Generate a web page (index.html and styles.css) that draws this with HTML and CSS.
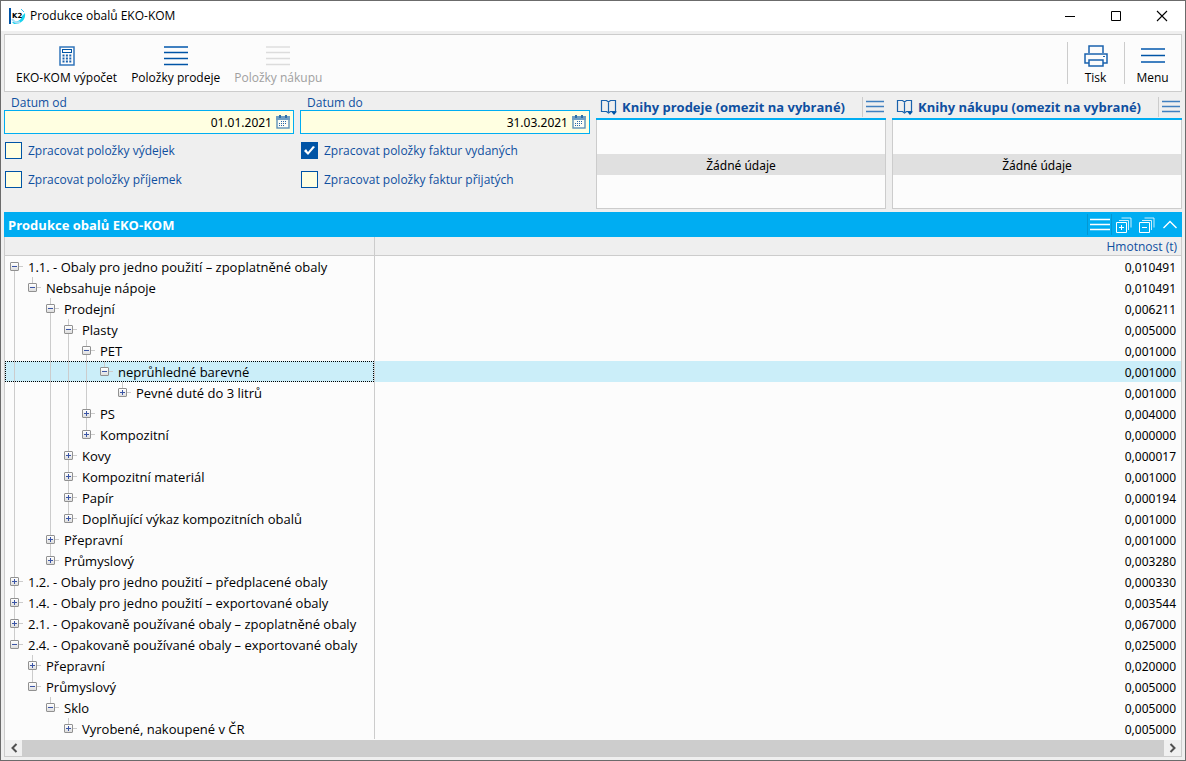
FILE: index.html
```html
<!DOCTYPE html>
<html lang="cs">
<head>
<meta charset="utf-8">
<title>Produkce obalů EKO-KOM</title>
<link rel="stylesheet" href="styles.css">
</head>
<body>
<svg class="defs" aria-hidden="true">
  <symbol id="calendar" viewBox="0 0 14 14"><rect x="1" y="2" width="12" height="11" fill="#fdfdf5" stroke="#5f92b8" stroke-width="1.4"/><path d="M0 1h14v4H0z" fill="#6f9fc4"/><path d="M3 0h2v3H3zM9 0h2v3H9z" fill="#2c6fa8"/><path d="M5 6.500h6M3 8.500h8M3 10.500h6" stroke="#2a67a8" stroke-dasharray="1 1"/></symbol>
  <symbol id="book" viewBox="0 0 17 16"><path d="M1.500 12.500V1.500H6.500L8.500 3L10.500 1.500H15.500V12.500H10.500L8.500 14L6.500 12.500zM8.500 3V13" fill="none" stroke="#1a62ad" stroke-width="1.200"/><path d="M11 12.500h6L14 16z" fill="#0054a6"/></symbol>
  <symbol id="lines" viewBox="0 0 20 14"><path d="M0 1.500h20M0 6.500h20M0 11.500h20" fill="none" stroke="currentColor" stroke-width="1.500"/></symbol>
</svg>
<div class="window">
  <header class="titlebar">
    <svg class="logo" width="17" height="17" viewBox="0 0 17 17" aria-hidden="true"><path d="M16 5c1 6-3 11-11 11l-2-2c6 0 9-2 10-6z" fill="#19d3ee"/><path d="M3 11c2 3 5 4 8 3" fill="none" stroke="#a8def5" stroke-width="2"/><path d="M12 1l3 3" stroke="#35bff0"/><path d="M0 0h2v16H0z" fill="#0054a6"/><text x="3" y="10" class="logo-text">K2</text></svg>
    <h1>Produkce obalů EKO-KOM</h1>
    <div class="window-buttons">
      <button aria-label="Minimalizovat"><svg width="12" height="12"><path d="M1 6.500h10" stroke="#000"/></svg></button>
      <button aria-label="Maximalizovat"><svg width="12" height="12"><path d="M1.500 1.500h9v9h-9z" fill="none" stroke="#000"/></svg></button>
      <button aria-label="Zavřít"><svg width="12" height="12"><path d="M1 1l10 10M11 1L1 11" stroke="#000" stroke-width="1.100"/></svg></button>
    </div>
  </header>

  <main class="content">
    <nav class="toolbar">
      <button class="tool"><svg width="24" height="24" viewBox="0 0 24 24"><rect x="5" y="3" width="14" height="18" fill="#fcfcfc" stroke="#3275bb" stroke-width="1.500"/><rect x="7.500" y="5.500" width="9" height="3" fill="none" stroke="#0054a6"/><path d="M7.500 11.500h9M7.500 14.500h9M7.500 17.500h9" stroke="#1a62ad" stroke-width="2" stroke-dasharray="2 1.400"/></svg>EKO-KOM výpočet</button>
      <button class="tool"><svg width="24" height="24" viewBox="0 0 24 24"><path d="M0 3h24" stroke="#4080c0" stroke-width="2"/><path d="M0 8.500h24M0 14.500h24M0 20.500h24" stroke="#0054a6" stroke-width="1.400"/></svg>Položky prodeje</button>
      <button class="tool" disabled><svg width="24" height="24" viewBox="0 0 24 24"><path d="M0 3h24" stroke="#e6e6e6" stroke-width="2"/><path d="M0 8.500h24M0 14.500h24M0 20.500h24" stroke="#dcdcdc" stroke-width="1.400"/></svg>Položky nákupu</button>
      <div class="tools-right">
        <button class="tool"><svg width="24" height="24" viewBox="0 0 24 24" fill="#fcfcfc" stroke="#1a62ad" stroke-width="1.500"><path d="M5 9V2h14v7M5 19H1V10h22v9h-4"/><path d="M5 16h14v6H5z"/><path d="M19 12.500h2" stroke-width="1"/></svg>Tisk</button>
        <button class="tool"><svg width="24" height="24" viewBox="0 0 24 24"><path d="M0 5h24M0 18h24" stroke="#4080c0" stroke-width="2"/><path d="M0 11.500h24" stroke="#0054a6" stroke-width="1.500"/></svg>Menu</button>
      </div>
    </nav>

    <section class="filters">
      <div class="filter">
        <label class="date-label" for="from">Datum od</label>
        <div class="date"><input id="from" value="01.01.2021"><button aria-label="Vybrat datum od"><svg width="14" height="14"><use href="#calendar"/></svg></button></div>
        <label class="check"><input type="checkbox">Zpracovat položky výdejek</label>
        <label class="check"><input type="checkbox">Zpracovat položky příjemek</label>
      </div>
      <div class="filter">
        <label class="date-label" for="to">Datum do</label>
        <div class="date"><input id="to" value="31.03.2021"><button aria-label="Vybrat datum do"><svg width="14" height="14"><use href="#calendar"/></svg></button></div>
        <label class="check"><input type="checkbox" checked>Zpracovat položky faktur vydaných</label>
        <label class="check"><input type="checkbox">Zpracovat položky faktur přijatých</label>
      </div>
      <section class="books">
        <header><svg width="17" height="16"><use href="#book"/></svg><h2>Knihy prodeje (omezit na vybrané)</h2><button aria-label="Nabídka knih prodeje"><svg width="18" height="14" viewBox="0 0 20 14" preserveAspectRatio="none"><use href="#lines"/></svg></button></header>
        <div class="books-body"><p>Žádné údaje</p></div>
      </section>
      <section class="books">
        <header><svg width="17" height="16"><use href="#book"/></svg><h2>Knihy nákupu (omezit na vybrané)</h2><button aria-label="Nabídka knih nákupu"><svg width="18" height="14" viewBox="0 0 20 14" preserveAspectRatio="none"><use href="#lines"/></svg></button></header>
        <div class="books-body"><p>Žádné údaje</p></div>
      </section>
    </section>

    <section class="report">
      <header class="report-head">
        <h2>Produkce obalů EKO-KOM</h2>
        <button class="lined" aria-label="Nabídka"><svg width="20" height="14"><use href="#lines"/></svg></button>
        <button aria-label="Rozbalit vše"><svg width="16" height="16" fill="none" stroke="#fff"><path d="M.5 5.500h10v10h-10zM3 10.500h5M5.500 8v5"/><path d="M3 3.500h9.500V13M5.500 1h9.500v9.500" opacity=".8"/></svg></button>
        <button aria-label="Sbalit vše"><svg width="16" height="16" fill="none" stroke="#fff"><path d="M.5 5.500h10v10h-10zM3 10.500h5"/><path d="M3 3.500h9.500V13M5.500 1h9.500v9.500" opacity=".8"/></svg></button>
        <button aria-label="Skrýt"><svg width="14" height="14" fill="none" stroke="#fff" stroke-width="1.400"><path d="M.5 10L7 3.500l6.500 6.500"/></svg></button>
      </header>
      <div class="grid">
        <table>
          <thead><tr><th class="name"></th><th>Hmotnost (t)</th></tr></thead>
          <tbody>
            <tr><td><div class="node"><button class="minus first" aria-label="Sbalit"></button>1.1. - Obaly pro jedno použití – zpoplatněné obaly</div></td><td>0,010491</td></tr>
            <tr><td><div class="node"><i class="bar"></i><button class="minus" aria-label="Sbalit"></button>Nebsahuje nápoje</div></td><td>0,010491</td></tr>
            <tr><td><div class="node"><i class="bar"></i><i></i><button class="minus mid" aria-label="Sbalit"></button>Prodejní</div></td><td>0,006211</td></tr>
            <tr><td><div class="node"><i class="bar"></i><i></i><i class="bar"></i><button class="minus mid" aria-label="Sbalit"></button>Plasty</div></td><td>0,005000</td></tr>
            <tr><td><div class="node"><i class="bar"></i><i></i><i class="bar"></i><i class="bar"></i><button class="minus mid" aria-label="Sbalit"></button>PET</div></td><td>0,001000</td></tr>
            <tr class="selected"><td><div class="node"><i class="bar"></i><i></i><i class="bar"></i><i class="bar"></i><i class="bar"></i><button class="minus" aria-label="Sbalit"></button>neprůhledné barevné</div></td><td>0,001000</td></tr>
            <tr><td><div class="node"><i class="bar"></i><i></i><i class="bar"></i><i class="bar"></i><i class="bar"></i><i></i><button class="plus" aria-label="Rozbalit"></button>Pevné duté do 3 litrů</div></td><td>0,001000</td></tr>
            <tr><td><div class="node"><i class="bar"></i><i></i><i class="bar"></i><i class="bar"></i><button class="plus mid" aria-label="Rozbalit"></button>PS</div></td><td>0,004000</td></tr>
            <tr><td><div class="node"><i class="bar"></i><i></i><i class="bar"></i><i class="bar"></i><button class="plus" aria-label="Rozbalit"></button>Kompozitní</div></td><td>0,000000</td></tr>
            <tr><td><div class="node"><i class="bar"></i><i></i><i class="bar"></i><button class="plus mid" aria-label="Rozbalit"></button>Kovy</div></td><td>0,000017</td></tr>
            <tr><td><div class="node"><i class="bar"></i><i></i><i class="bar"></i><button class="plus mid" aria-label="Rozbalit"></button>Kompozitní materiál</div></td><td>0,001000</td></tr>
            <tr><td><div class="node"><i class="bar"></i><i></i><i class="bar"></i><button class="plus mid" aria-label="Rozbalit"></button>Papír</div></td><td>0,000194</td></tr>
            <tr><td><div class="node"><i class="bar"></i><i></i><i class="bar"></i><button class="plus" aria-label="Rozbalit"></button>Doplňující výkaz kompozitních obalů</div></td><td>0,001000</td></tr>
            <tr><td><div class="node"><i class="bar"></i><i></i><button class="plus mid" aria-label="Rozbalit"></button>Přepravní</div></td><td>0,001000</td></tr>
            <tr><td><div class="node"><i class="bar"></i><i></i><button class="plus" aria-label="Rozbalit"></button>Průmyslový</div></td><td>0,003280</td></tr>
            <tr><td><div class="node"><button class="plus mid" aria-label="Rozbalit"></button>1.2. - Obaly pro jedno použití – předplacené obaly</div></td><td>0,000330</td></tr>
            <tr><td><div class="node"><button class="plus mid" aria-label="Rozbalit"></button>1.4. - Obaly pro jedno použití – exportované obaly</div></td><td>0,003544</td></tr>
            <tr><td><div class="node"><button class="plus mid" aria-label="Rozbalit"></button>2.1. - Opakovaně používané obaly – zpoplatněné obaly</div></td><td>0,067000</td></tr>
            <tr><td><div class="node"><button class="minus" aria-label="Sbalit"></button>2.4. - Opakovaně používané obaly – exportované obaly</div></td><td>0,025000</td></tr>
            <tr><td><div class="node"><i></i><button class="plus mid" aria-label="Rozbalit"></button>Přepravní</div></td><td>0,020000</td></tr>
            <tr><td><div class="node"><i></i><button class="minus" aria-label="Sbalit"></button>Průmyslový</div></td><td>0,005000</td></tr>
            <tr><td><div class="node"><i></i><i></i><button class="minus" aria-label="Sbalit"></button>Sklo</div></td><td>0,005000</td></tr>
            <tr><td><div class="node"><i></i><i></i><i></i><button class="plus" aria-label="Rozbalit"></button>Vyrobené, nakoupené v ČR</div></td><td>0,005000</td></tr>
          </tbody>
        </table>
        <div class="scrollbar">
          <button aria-label="Posunout vlevo"><svg width="8" height="10"><path d="M6.500 1L2.500 5l4 4" fill="none" stroke="#505050" stroke-width="2"/></svg></button>
          <div class="thumb"></div>
          <button aria-label="Posunout vpravo"><svg width="8" height="10"><path d="M1.500 1l4 4-4 4" fill="none" stroke="#505050" stroke-width="2"/></svg></button>
        </div>
      </div>
    </section>
  </main>
</div>
</body>
</html>
```
FILE: styles.css
```css
*, *::before { box-sizing: border-box; }
body {
  margin: 0;
  font: 12px/16px "Open Sans", "Noto Sans", sans-serif;
  color: #000;
}
h1, h2, p { margin: 0; font-size: 12px; }
h2 { font-size: 13px; }
button {
  display: flex;
  align-items: center;
  justify-content: center;
  padding: 0;
  border: 0;
  background: none;
  font: inherit;
  color: inherit;
}
svg { display: block; flex: none; }
.defs { position: absolute; width: 0; height: 0; }

.window {
  display: flex;
  flex-direction: column;
  min-height: 100vh;
  border: 1px solid #6b6b6b;
  background: #efefef;
}
.titlebar {
  display: flex;
  align-items: center;
  height: 30px;
  padding-left: 8px;
  background: #fff;
}
.titlebar h1 {
  flex: 1;
  padding-left: 4px;
  font-weight: 400;
}
.logo-text { font: bold 7px "DejaVu Sans", sans-serif; }
.window-buttons { display: flex; }
.window-buttons button { width: 46px; height: 30px; }

.content {
  flex: 1;
  display: flex;
  flex-direction: column;
  padding: 3px;
}
.toolbar {
  display: flex;
  height: 58px;
  padding-left: 4px;
  border: 1px solid #ccc;
  background: #fcfcfc;
}
.tool {
  flex-direction: column;
  gap: 2px;
  padding: 6px 7px 2px;
}
.tool:disabled { color: #a0a0a0; }
.tools-right { display: flex; margin-left: auto; }
.tools-right .tool {
  min-width: 57px;
  position: relative;
}
.tools-right .tool::before {
  content: "";
  position: absolute;
  left: 0;
  top: 7px;
  bottom: 7px;
  border-left: 1px solid #ccc;
}

.filters {
  display: grid;
  grid-template-columns: repeat(4, 1fr);
  gap: 6px;
  padding: 3px 0;
}
.filter { color: #0f4fa0; }
.date-label { display: block; padding-left: 7px; line-height: 15px; }
.date {
  display: flex;
  align-items: center;
  height: 24px;
  padding-right: 3px;
  border: 1px solid #00adf2;
  background: #ffffe1;
}
.date input {
  flex: 1;
  min-width: 0;
  padding: 2px 4px 0 0;
  border: 0;
  background: none;
  font: 12px/16px "Noto Sans", sans-serif;
  text-align: right;
  outline: 0;
}
.check {
  display: flex;
  align-items: center;
  gap: 6px;
  height: 17px;
  margin: 8px 0 12px 1px;
}
.check + .check { margin: 0 0 0 1px; }
.check input {
  appearance: none;
  width: 17px;
  height: 17px;
  margin: 0;
  border: 1px solid #0054a6;
  background: #ffffe1;
}
.check input:checked { background: #0054a6; }
.check input:checked::before {
  content: "";
  display: block;
  width: 11px;
  height: 9px;
  margin: 3px 2px;
  background: #fff;
  clip-path: polygon(0 5px, 2px 3px, 4px 6px, 9px 0, 11px 1px, 4px 9px);
}

.books { display: flex; flex-direction: column; }
.books header {
  display: flex;
  align-items: center;
  height: 25px;
  padding-left: 4px;
  border-bottom: 2px solid #00adf2;
  color: #0f4fa0;
}
.books h2 { flex: 1; padding-left: 5px; }
.books header button {
  width: 24px;
  height: 20px;
  border-left: 1px solid #ccc;
  color: #4080c0;
}
.books-body {
  display: flex;
  align-items: center;
  height: 89px;
  border: 1px solid #ccc;
  border-top: 0;
  background: #fcfcfc;
}
.books p {
  flex: 1;
  padding-top: 2px;
  background: #e0e0e0;
  font-family: "Noto Sans", sans-serif;
  line-height: 19px;
  text-align: center;
}

.report { flex: 1; display: flex; flex-direction: column; }
.report-head {
  display: flex;
  align-items: center;
  height: 25px;
  padding: 0 1px 0 4px;
  background: #00adf2;
  color: #fff;
}
.report-head h2 { flex: 1; }
.report-head button { width: 23px; }
.report-head .lined {
  width: 25px;
  height: 21px;
  border: solid #0497d3;
  border-width: 0 1px;
}
.grid {
  flex: 1;
  display: flex;
  flex-direction: column;
  justify-content: space-between;
  border: 1px solid #ccc;
  border-top: 0;
  background: #fcfcfc;
}
table {
  width: 100%;
  border-collapse: separate;
  border-spacing: 0;
  table-layout: fixed;
}
th {
  height: 19px;
  padding: 2px 4px 0;
  border-bottom: 1px solid #ccc;
  background: #efefef;
  color: #0f4fa0;
  font-weight: 400;
  text-align: right;
}
.name { width: 370px; border-right: 1px solid #ccc; }
td {
  height: 21px;
  padding: 2px 5px 0;
  font-family: "Noto Sans", sans-serif;
  text-align: right;
}
td:first-child {
  padding: 0;
  border-right: 1px solid #ccc;
  font-family: "Open Sans", sans-serif;
  font-size: 13px;
  text-align: left;
}
.selected { background: #cbeef9; }
.selected .node { outline: 1px dotted #000; outline-offset: -1px; }

.node {
  display: flex;
  height: 21px;
  line-height: 22px;
  white-space: nowrap;
}
.node i { width: 18px; }
.bar { background: linear-gradient(#ccc, #ccc) 9px 0 / 1px 100% no-repeat; }
.node button {
  position: relative;
  width: 18px;
  height: 21px;
  margin-right: 5px;
  background: linear-gradient(#ccc, #ccc) 9px 0 / 1px 10px no-repeat,
    linear-gradient(#ccc, #ccc) 100% 10px / 9px 1px no-repeat;
}
.node .mid {
  background: linear-gradient(#ccc, #ccc) 9px 0 / 1px 100% no-repeat,
    linear-gradient(#ccc, #ccc) 100% 10px / 9px 1px no-repeat;
}
.node .first {
  background: linear-gradient(#ccc, #ccc) 9px 10px / 1px 11px no-repeat,
    linear-gradient(#ccc, #ccc) 100% 10px / 9px 1px no-repeat;
}
.node button::before {
  content: "";
  position: absolute;
  left: 5px;
  top: 6px;
  width: 9px;
  height: 9px;
  border: 1px solid #919191;
  border-radius: 1px;
  background: linear-gradient(#3b55a5, #3b55a5) center / 5px 1px no-repeat,
    linear-gradient(#fff, #dedede);
}
.node .plus::before {
  background: linear-gradient(#3b55a5, #3b55a5) center / 5px 1px no-repeat,
    linear-gradient(#3b55a5, #3b55a5) center / 1px 5px no-repeat,
    linear-gradient(#fff, #dedede);
}

.scrollbar { display: flex; height: 16px; background: #f0f0f0; }
.scrollbar button { width: 17px; }
.thumb { flex: 1; background: #cdcdcd; }
```
